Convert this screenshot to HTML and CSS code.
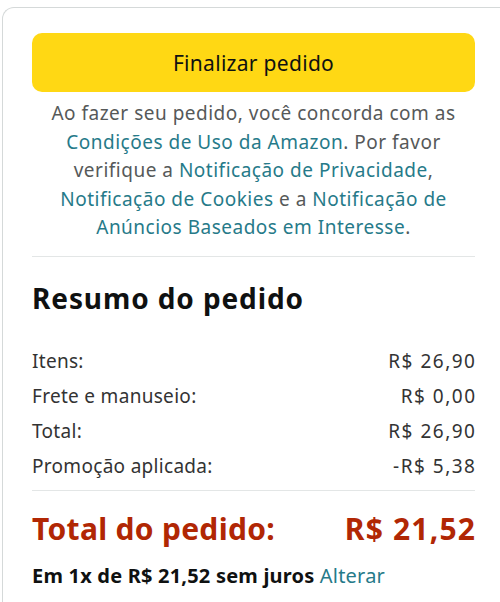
FILE: index.html
```html
<!DOCTYPE html>
<html lang="pt-BR">

<head>
    <meta charset="UTF-8">
    <meta name="viewport" content="width=device-width, initial-scale=1.0">
    <title>Resumo do pedido</title>
    <link rel="stylesheet" href="styles.css">
</head>

<body>
    <div class="box">
        <button class="btn-checkout">Finalizar pedido</button>
        <p class="terms">
            Ao fazer seu pedido, você concorda com as<br>
            <a href="#">Condições de Uso da Amazon</a>. Por favor<br>
            verifique a <a href="#">Notificação de Privacidade</a>,<br>
            <a href="#">Notificação de Cookies</a> e a <a href="#">Notificação de</a><br>
            <a href="#">Anúncios Baseados em Interesse</a>.
        </p>

        <hr class="divider">

        <h2 class="summary-title">Resumo do pedido</h2>

        <div class="summary-rows">
            <div class="row"><span>Itens:</span><span class="amount">R$ 26,90</span></div>
            <div class="row"><span>Frete e manuseio:</span><span class="amount">R$ 0,00</span></div>
            <div class="row"><span>Total:</span><span class="amount">R$ 26,90</span></div>
            <div class="row"><span>Promoção aplicada:</span><span class="amount">-R$ 5,38</span></div>
        </div>

        <hr class="divider divider-tight">

        <div class="row grand-total"><span>Total do pedido:</span><span class="amount">R$ 21,52</span></div>

        <p class="installments">Em 1x de R$ 21,52 sem juros <a href="#">Alterar</a></p>
    </div>
</body>

</html>
```

FILE: styles.css
```css
* {
    margin: 0;
    padding: 0;
    box-sizing: border-box;
}

body {
    height: 602px;
    background-color: #fff;
    font-family: "Noto Sans", Arial, sans-serif;
    color: #0f1111;
    overflow: hidden;
}

.box {
    margin: 7px -20px 0 2px;
    height: 595px;
    border: 1px solid #d5d9d9;
    border-right: none;
    border-bottom: none;
    border-radius: 12px 0 0 0;
    padding: 25px 45px 0 29px;
}

.btn-checkout {
    display: block;
    width: 443px;
    height: 59px;
    background-color: #ffd814;
    border: none;
    border-radius: 10px;
    font-family: inherit;
    font-size: 21px;
    letter-spacing: 0.3px;
    color: #0f1111;
}

.terms {
    width: 443px;
    margin-top: 7px;
    text-align: center;
    font-size: 19px;
    letter-spacing: 0.5px;
    line-height: 28.5px;
    white-space: nowrap;
    color: #565959;
}

.terms a,
.installments a {
    color: #267a89;
    text-decoration: none;
}

.divider {
    width: 443px;
    border: none;
    border-top: 1px solid #e3e6e6;
    margin-top: 14px;
}

.divider-tight {
    margin-top: 6px;
}

.summary-title {
    margin-top: 23px;
    font-size: 28px;
    font-weight: 700;
    letter-spacing: 0.9px;
    line-height: 36px;
}

.summary-rows {
    width: 443px;
    margin-top: 28px;
}

.row {
    display: flex;
    justify-content: space-between;
    width: 443px;
    font-size: 19px;
    letter-spacing: 0.3px;
    line-height: 35px;
    color: #333;
}

.row .amount {
    letter-spacing: 1.5px;
    margin-right: -1.5px;
}

.grand-total {
    margin-top: 18px;
    font-size: 30px;
    font-weight: 700;
    letter-spacing: 0.3px;
    line-height: 40px;
    color: #b12704;
}

.grand-total .amount {
    letter-spacing: 1.2px;
    margin-right: -1.2px;
}

.installments {
    margin-top: 13px;
    font-size: 20px;
    font-weight: 700;
    letter-spacing: 0.2px;
    line-height: 28px;
}

.installments a {
    font-weight: 400;
}
```
